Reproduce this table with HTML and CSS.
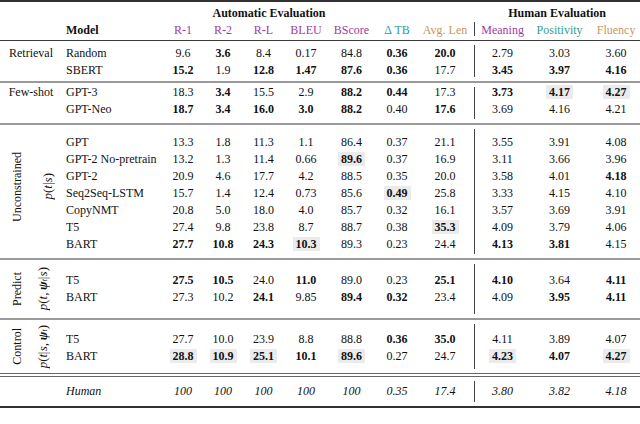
FILE: index.html
```html
<!DOCTYPE html>
<html>
<head>
<meta charset="utf-8">
<link rel="stylesheet" href="styles.css">
</head>
<body>
<table class="results">
  <colgroup>
    <col class="c-grp"><col class="c-model">
    <col class="c-r1"><col class="c-r2"><col class="c-rl"><col class="c-bleu"><col class="c-bs"><col class="c-tb"><col class="c-al">
    <col class="c-me"><col class="c-po"><col class="c-fl">
  </colgroup>
  <thead>
    <tr class="h1">
      <th></th><th></th>
      <th colspan="5" class="b">Automatic Evaluation</th>
      <th></th><th></th>
      <th colspan="3" class="b">Human Evaluation</th>
    </tr>
    <tr class="h2">
      <th></th><th class="model b">Model</th>
      <th class="pu">R-1</th><th class="pu">R-2</th><th class="pu">R-L</th><th class="pu">BLEU</th><th class="pu">BScore</th>
      <th class="te">Δ TB</th><th class="ta al">Avg. Len</th>
      <th class="pu m">Meaning</th><th class="te">Positivity</th><th class="ta fl">Fluency</th>
    </tr>
  </thead>
  <tbody class="g retrieval">
    <tr>
      <td class="grp-h">Retrieval</td><td class="model">Random</td>
      <td>9.6</td><td class="b">3.6</td><td>8.4</td><td>0.17</td><td>84.8</td><td class="b">0.36</td><td class="b al">20.0</td>
      <td class="m">2.79</td><td>3.03</td><td class="fl">3.60</td>
    </tr>
    <tr>
      <td></td><td class="model">SBERT</td>
      <td class="b">15.2</td><td>1.9</td><td class="b">12.8</td><td class="b">1.47</td><td class="b">87.6</td><td class="b">0.36</td><td class="al">17.7</td>
      <td class="m b">3.45</td><td class="b">3.97</td><td class="b fl">4.16</td>
    </tr>
  </tbody>
  <tbody class="g fewshot">
    <tr>
      <td class="grp-h">Few-shot</td><td class="model">GPT-3</td>
      <td>18.3</td><td class="b">3.4</td><td>15.5</td><td>2.9</td><td class="b">88.2</td><td class="b">0.44</td><td class="al">17.3</td>
      <td class="m b">3.73</td><td><span class="hl">4.17</span></td><td class="fl"><span class="hl">4.27</span></td>
    </tr>
    <tr>
      <td></td><td class="model">GPT-Neo</td>
      <td class="b">18.7</td><td class="b">3.4</td><td class="b">16.0</td><td class="b">3.0</td><td class="b">88.2</td><td>0.40</td><td class="b al">17.6</td>
      <td class="m">3.69</td><td>4.16</td><td class="fl">4.21</td>
    </tr>
  </tbody>
  <tbody class="g unconstrained">
    <tr>
      <td class="grp grp-u" rowspan="7">
        <div class="glabel gl-u">
          <span class="rot">Unconstrained</span>
          <span class="rot math"><i>p</i>(<i>t</i>|<i>s</i>)</span>
        </div>
      </td>
      <td class="model">GPT</td>
      <td>13.3</td><td>1.8</td><td>11.3</td><td>1.1</td><td>86.4</td><td>0.37</td><td class="al">21.1</td>
      <td class="m">3.55</td><td>3.91</td><td class="fl">4.08</td>
    </tr>
    <tr>
      <td class="model">GPT-2 No-pretrain</td>
      <td>13.2</td><td>1.3</td><td>11.4</td><td>0.66</td><td><span class="hl">89.6</span></td><td>0.37</td><td class="al">16.9</td>
      <td class="m">3.11</td><td>3.66</td><td class="fl">3.96</td>
    </tr>
    <tr>
      <td class="model">GPT-2</td>
      <td>20.9</td><td>4.6</td><td>17.7</td><td>4.2</td><td>88.5</td><td>0.35</td><td class="al">20.0</td>
      <td class="m">3.58</td><td>4.01</td><td class="b fl">4.18</td>
    </tr>
    <tr>
      <td class="model">Seq2Seq-LSTM</td>
      <td>15.7</td><td>1.4</td><td>12.4</td><td>0.73</td><td>85.6</td><td><span class="hl">0.49</span></td><td class="al">25.8</td>
      <td class="m">3.33</td><td>4.15</td><td class="fl">4.10</td>
    </tr>
    <tr>
      <td class="model">CopyNMT</td>
      <td>20.8</td><td>5.0</td><td>18.0</td><td>4.0</td><td>85.7</td><td>0.32</td><td class="al">16.1</td>
      <td class="m">3.57</td><td>3.69</td><td class="fl">3.91</td>
    </tr>
    <tr>
      <td class="model">T5</td>
      <td>27.4</td><td>9.8</td><td>23.8</td><td>8.7</td><td>88.7</td><td>0.38</td><td class="al"><span class="hl">35.3</span></td>
      <td class="m">4.09</td><td>3.79</td><td class="fl">4.06</td>
    </tr>
    <tr>
      <td class="model">BART</td>
      <td class="b">27.7</td><td class="b">10.8</td><td class="b">24.3</td><td><span class="hl">10.3</span></td><td>89.3</td><td>0.23</td><td class="al">24.4</td>
      <td class="m b">4.13</td><td class="b">3.81</td><td class="fl">4.15</td>
    </tr>
  </tbody>
  <tbody class="g predict">
    <tr>
      <td class="grp" rowspan="2">
        <div class="glabel gl-pc">
          <span class="rot">Predict</span>
          <span class="rot math"><i>p</i>(<i>t</i>,&#8201;<b><i>ψ</i></b><sub><i>t</i></sub><span class="mid">|</span><i>s</i>)</span>
        </div>
      </td>
      <td class="model">T5</td>
      <td class="b">27.5</td><td class="b">10.5</td><td>24.0</td><td class="b">11.0</td><td>89.0</td><td>0.23</td><td class="b al">25.1</td>
      <td class="m b">4.10</td><td>3.64</td><td class="b fl">4.11</td>
    </tr>
    <tr>
      <td class="model">BART</td>
      <td>27.3</td><td>10.2</td><td class="b">24.1</td><td>9.85</td><td class="b">89.4</td><td class="b">0.32</td><td class="al">23.4</td>
      <td class="m">4.09</td><td class="b">3.95</td><td class="b fl">4.11</td>
    </tr>
  </tbody>
  <tbody class="g control">
    <tr>
      <td class="grp" rowspan="2">
        <div class="glabel gl-pc">
          <span class="rot">Control</span>
          <span class="rot math"><i>p</i>(<i>t</i><span class="mid">|</span><i>s</i>,&#8201;<b><i>ψ</i></b><sub><i>t</i></sub>)</span>
        </div>
      </td>
      <td class="model">T5</td>
      <td>27.7</td><td>10.0</td><td>23.9</td><td>8.8</td><td>88.8</td><td class="b">0.36</td><td class="b al">35.0</td>
      <td class="m">4.11</td><td>3.89</td><td class="fl">4.07</td>
    </tr>
    <tr>
      <td class="model">BART</td>
      <td><span class="hl">28.8</span></td><td><span class="hl">10.9</span></td><td><span class="hl">25.1</span></td><td class="b">10.1</td><td><span class="hl">89.6</span></td><td>0.27</td><td class="al">24.7</td>
      <td class="m"><span class="hl">4.23</span></td><td class="b">4.07</td><td class="fl"><span class="hl">4.27</span></td>
    </tr>
  </tbody>
  <tbody class="g human">
    <tr>
      <td></td><td class="model it">Human</td>
      <td class="it">100</td><td class="it">100</td><td class="it">100</td><td class="it">100</td><td class="it">100</td><td class="it">0.35</td><td class="it al">17.4</td>
      <td class="m it">3.80</td><td class="it">3.82</td><td class="it fl">4.18</td>
    </tr>
  </tbody>
</table>
</body>
</html>
```

FILE: styles.css
```css
html, body {
  margin: 0;
  padding: 0;
  background: #ffffff;
}

body {
  font-family: "Liberation Serif", "Times New Roman", serif;
  font-size: 12px;
  color: #111111;
}

.results {
  width: 640px;
  table-layout: fixed;
  border-collapse: collapse;
  border-top: 2px solid #333333;
  border-bottom: 2px solid #333333;
}

.c-grp { width: 62px; }
.c-model { width: 101px; }
.c-r1 { width: 40px; }
.c-r2 { width: 40px; }
.c-rl { width: 41px; }
.c-bleu { width: 44px; }
.c-bs { width: 47px; }
.c-tb { width: 44px; }
.c-al { width: 55px; }
.c-me { width: 57px; }
.c-po { width: 57px; }
.c-fl { width: 52px; }

th, td {
  padding: 0;
  line-height: 17px;
  text-align: center;
  white-space: nowrap;
  font-weight: normal;
  vertical-align: middle;
}

.b { font-weight: bold; }
.it { font-style: italic; }

.pu { color: #a13a9f; }
.te { color: #2d9d99; }
.ta { color: #c9965f; }

td.model, th.model {
  text-align: left;
  padding-left: 4px;
}

.al { padding-right: 3px; }
.fl { padding-left: 4px; }

.hl {
  background: #ebebeb;
  padding: 0 3px;
  font-weight: bold;
}

thead {
  border-bottom: 1px solid #3a3a3a;
}
.h1 th {
  padding-top: 3px;
}
.h2 th {
  padding-bottom: 1px;
}

.m {
  background-image: linear-gradient(#444444, #444444);
  background-repeat: no-repeat;
  background-position: 0 0;
  background-size: 1px 100%;
}
.h2 th.m {
  background-size: 1px calc(100% - 4px);
}
tbody tr:first-child td.m {
  background-position: 0 4px;
  background-size: 1px calc(100% - 4px);
}
tbody tr:last-child td.m {
  background-size: 1px calc(100% - 4px);
}
tbody tr:first-child:last-child td.m {
  background-position: 0 4px;
  background-size: 1px calc(100% - 8px);
}

tbody.g {
  border-bottom: 2px solid #9a9a9a;
}
tbody.control {
  border-bottom: 4px double #666666;
}
tbody.human {
  border-bottom: 0;
}

tbody tr:first-child td:not(.grp) {
  padding-top: var(--pt);
}
tbody tr:last-child td:not(.grp) {
  padding-bottom: var(--pb);
}

.retrieval { --pt: 4px; --pb: 2px; }
.fewshot { --pt: 1px; --pb: 5px; }
.unconstrained { --pt: 9px; --pb: 5px; }
.predict { --pt: 12px; --pb: 12px; }
.control { --pt: 11px; --pb: 8px; }
.human { --pt: 6px; --pb: 6px; }

.grp-h {
  text-align: center;
}

.grp-u {
  padding-bottom: 10px;
}

.glabel {
  display: grid;
  align-items: center;
  justify-items: center;
}
.gl-u { grid-template-columns: 34px 28px; }
.gl-pc { grid-template-columns: 34px 18px; }

.rot {
  writing-mode: vertical-rl;
  transform: rotate(180deg);
  line-height: 14px;
}

.math {
  font-size: 13px;
}

.math .mid {
  padding: 0 2px;
}

.math sub {
  font-size: 8px;
  line-height: 0;
  vertical-align: -2px;
}
```
